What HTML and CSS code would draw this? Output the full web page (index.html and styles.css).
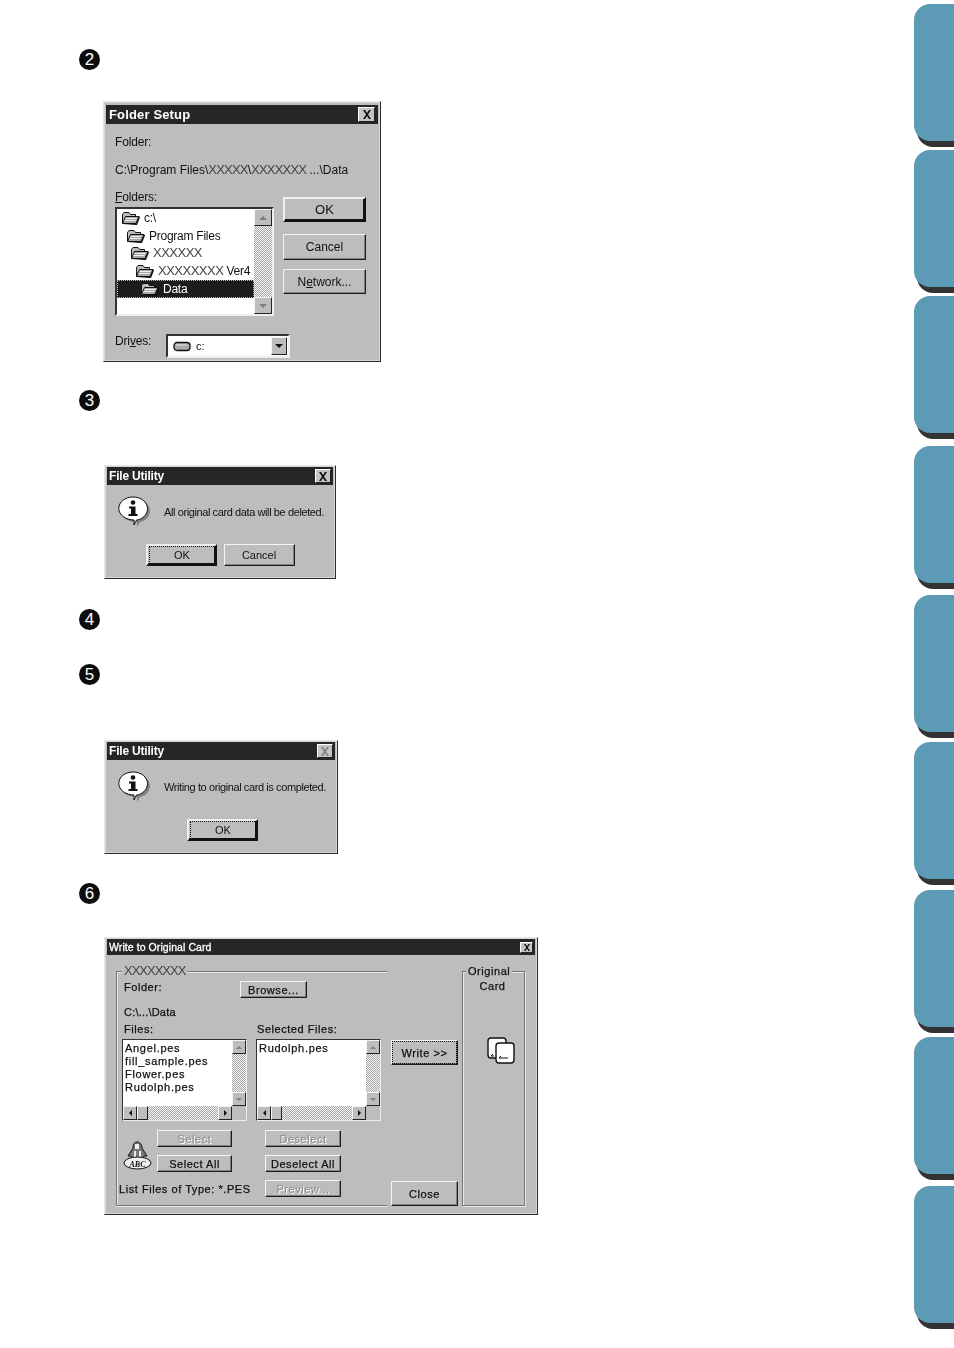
FILE: index.html
```html
<!DOCTYPE html>
<html lang="en">
<head>
<meta charset="utf-8">
<title>Write to Original Card</title>
<link rel="stylesheet" href="styles.css">
</head>
<body>
<svg class="defs" aria-hidden="true">
  <symbol id="folder" viewBox="0 0 19 14">
    <path d="M1.500 12.500V3.500L3 1.500H8L9.500 3.500H14.500V5" fill="#bbb" stroke="#111" stroke-width="1"/>
    <path d="M1.500 12.500L4.500 5.500H18L15 12.500Z" fill="#a8a8a8" stroke="#111" stroke-width="1"/>
    <path d="M15 13L18 5.500L19 6.500L16 14H2Z" fill="#111"/>
    <path d="M4.500 7.500H15.500M3.500 9.500H14.500" stroke="#eee" stroke-width="1"/>
  </symbol>
  <symbol id="info" viewBox="0 0 32 32">
    <path d="M17 3C25 3 32 8 32 15C32 21 27 25 22 26L19 31V26C10 26 3 22 3 15C3 8 9 3 17 3Z" fill="#808080"/>
    <path d="M15 1C23 1 29.500 6 29.500 12.500C29.500 19 24 23.500 18.500 24L16 29V24C8 24 .8 19 .8 12.500C.8 6 7 1 15 1Z" fill="#fff" stroke="#111" stroke-width="1"/>
    <circle cx="15" cy="6.500" r="2.300" fill="#111"/>
    <path d="M11 10.500H17.500V18H19.500V20H10.500V18H13V12.500H11Z" fill="#111"/>
  </symbol>
  <symbol id="close" viewBox="0 0 10 9">
    <path d="M1 0H3L5 3L7 0H9L6 4.500L9 9H7L5 6L3 9H1L4 4.500Z"/>
  </symbol>
</svg>

<div class="page">
  <main class="doc">
    <div class="step step-2">2</div>
    <section class="dlg setup">
      <header class="title title-lg"><span>Folder Setup</span><span class="x x-lg"><svg><use href="#close"/></svg></span></header>
      <p class="txt first">Folder:</p>
      <p class="txt path">C:\Program Files\<span class="xs">XXXXX</span>\<span class="xs">XXXXXXX</span> ...\Data</p>
      <div class="setup-row">
        <div>
          <p class="txt"><u>F</u>olders:</p>
          <div class="tree">
            <ul class="tree-list">
              <li class="lv0"><svg class="fold"><use href="#folder"/></svg>c:\</li>
              <li class="lv1"><svg class="fold"><use href="#folder"/></svg>Program Files</li>
              <li class="lv2"><svg class="fold"><use href="#folder"/></svg><span class="xs">XXXXXX</span></li>
              <li class="lv3"><svg class="fold"><use href="#folder"/></svg><span class="xs">XXXXXXXX</span>&nbsp;Ver4</li>
              <li class="lv4 sel"><svg class="fold"><use href="#folder"/></svg>Data</li>
            </ul>
            <div class="vbar vbar-lg"><span class="sb"><i class="up"></i></span><span class="sb"><i class="down"></i></span></div>
          </div>
        </div>
        <div class="setup-btns">
          <button class="btn def ok-lg">OK</button>
          <button class="btn cancel-lg">Cancel</button>
          <button class="btn net-lg">N<u>e</u>twork...</button>
        </div>
      </div>
      <div class="drive-row">
        <span class="txt drive-label">Dri<u>v</u>es:</span>
        <div class="combo">
          <svg class="hdd" viewBox="0 0 19 11"><rect x="1" y="1.500" width="16" height="8" rx="3" fill="#aaa" stroke="#111" stroke-width="1.300"/><path d="M3 4H14" stroke="#eee"/></svg>
          <span class="combo-val">c:</span>
          <span class="sb combo-btn"><i class="down dark"></i></span>
        </div>
      </div>
    </section>

    <div class="step step-3">3</div>
    <section class="dlg msg msg-a">
      <header class="title title-md"><span>File Utility</span><span class="x"><svg><use href="#close"/></svg></span></header>
      <div class="msg-row"><svg class="info"><use href="#info"/></svg><p class="msg-text">All original card data will be deleted.</p></div>
      <div class="msg-btns">
        <button class="btn def msg-btn"><span class="focus">OK</span></button>
        <button class="btn msg-btn">Cancel</button>
      </div>
    </section>

    <div class="step step-4">4</div>
    <div class="step step-5">5</div>
    <section class="dlg msg msg-b">
      <header class="title title-md"><span>File Utility</span><span class="x x-off"><svg><use href="#close"/></svg></span></header>
      <div class="msg-row"><svg class="info"><use href="#info"/></svg><p class="msg-text">Writing to original card is completed.</p></div>
      <div class="msg-btns">
        <button class="btn def msg-btn"><span class="focus">OK</span></button>
      </div>
    </section>

    <div class="step step-6">6</div>
    <section class="dlg card">
      <header class="title title-sm"><span>Write to Original Card</span><span class="x x-sm"><svg><use href="#close"/></svg></span></header>
      <div class="card-body">
        <div class="group">
          <span class="legend legend-x"><span class="xs xs-sm">XXXXXXXX</span></span>
          <div class="folder-row"><span class="lab folder-lab">Folder:</span><button class="btn btn-sm browse">Browse...</button></div>
          <p class="lab card-path">C:\...\Data</p>
          <div class="lists">
            <div>
              <p class="lab list-lab">Files:</p>
              <div class="lbox">
                <ul class="files"><li>Angel.pes</li><li>fill_sample.pes</li><li>Flower.pes</li><li>Rudolph.pes</li></ul>
                <div class="vbar"><span class="sb sb-sm"><i class="up pale"></i></span><span class="sb sb-sm"><i class="down pale"></i></span></div>
                <div class="hbar"><span class="sb sb-sm"><i class="left"></i></span><span class="sb sb-sm thumb"></span><span class="hfill"></span><span class="sb sb-sm"><i class="right"></i></span></div>
                <span class="corner"></span>
              </div>
            </div>
            <div>
              <p class="lab list-lab">Selected Files:</p>
              <div class="lbox">
                <ul class="files"><li>Rudolph.pes</li></ul>
                <div class="vbar"><span class="sb sb-sm"><i class="up pale"></i></span><span class="sb sb-sm"><i class="down pale"></i></span></div>
                <div class="hbar"><span class="sb sb-sm"><i class="left"></i></span><span class="sb sb-sm thumb"></span><span class="hfill"></span><span class="sb sb-sm"><i class="right"></i></span></div>
                <span class="corner"></span>
              </div>
            </div>
          </div>
          <div class="actions">
            <svg class="stamp" viewBox="0 0 29 29">
              <path d="M14 1C18 1 19 5 19 7L24 15H21L20 18H9L8 15H5L10 7C10 4 11 1 14 1Z" fill="#777" stroke="#111"/>
              <path d="M12 3H16V8H12ZM11 10H13V16H11ZM16 10H18V16H16Z" fill="#eee"/>
              <ellipse cx="14.500" cy="22" rx="13.500" ry="6" fill="#eee" stroke="#111"/>
              <text class="stamp-text" x="14.500" y="25.500" text-anchor="middle">ABC</text>
            </svg>
            <button class="btn btn-sm off act-a">Select</button>
            <button class="btn btn-sm off act-b">Deselect</button>
            <button class="btn btn-sm act-a">Select All</button>
            <button class="btn btn-sm act-b">Deselect All</button>
            <span class="lab type-lab">List Files of Type: *.PES</span>
            <button class="btn btn-sm off act-b">Preview...</button>
          </div>
        </div>
        <div class="write-col">
          <button class="btn btn-sm write"><span class="focus focus-sm">Write &gt;&gt;</span></button>
          <button class="btn btn-sm write">Close</button>
        </div>
        <div class="orig">
          <span class="legend legend-o">Original</span>
          <span class="lab orig-lab">Card</span>
          <svg class="cards" viewBox="0 0 28 27">
            <rect x="1" y="1" width="18" height="20" rx="3" fill="#fff" stroke="#111" stroke-width="1.400"/>
            <rect x="9" y="6" width="18" height="20" rx="3" fill="#fff" stroke="#111" stroke-width="1.400"/>
            <path d="M4 19H7M4 19L6 17M12 21H21M12 21L14 19" stroke="#111" fill="none"/>
          </svg>
        </div>
      </div>
    </section>
  </main>

  <aside class="tabs">
    <div class="tab"></div><div class="tab"></div><div class="tab"></div>
    <div class="tab"></div><div class="tab"></div><div class="tab"></div>
    <div class="tab"></div><div class="tab"></div><div class="tab"></div>
  </aside>
</div>
</body>
</html>
```

FILE: styles.css
```css
* { box-sizing: border-box; }
html, body { margin: 0; padding: 0; background: #fff; }
body { font-family: "Liberation Sans", Arial, sans-serif; color: #111; }
p, ul { margin: 0; padding: 0; list-style: none; }
.defs { display: none; }

.page { display: flex; justify-content: space-between; width: 954px; height: 1348px; overflow: hidden; }
.doc { padding: 49px 0 0 79px; }

/* numbered steps */
.step {
  width: 21px; height: 21px; border-radius: 50%;
  background: #0c0c0c; color: #fff;
  font-size: 17px; line-height: 22px; text-align: center;
}
.step-3 { margin-top: 28px; }
.step-4 { margin-top: 30px; }
.step-5 { margin-top: 34px; }
.step-6 { margin-top: 29px; }

/* dialogs */
.dlg {
  background: #bdbdbd;
  border: 1px solid; border-color: #e6e6e6 #2c2c2c #2c2c2c #e6e6e6;
  outline: 1px solid #d8d8d8; outline-offset: -2px;
  filter: blur(.3px);
  padding: 2px;
}
.title {
  display: flex; align-items: center; justify-content: space-between;
  background: #262626; color: #fff; font-weight: 700;
}
.title-lg { height: 19px; padding: 0 3px 0 3px; font-size: 13px; margin: 1px 0 0; letter-spacing: .15px; }
.title-md { height: 18px; padding: 0 2px 0 2px; font-size: 12px; letter-spacing: -.2px; }
.title-sm { height: 16px; padding: 0 2px 0 2px; font-size: 10.500px; font-weight: 400; letter-spacing: .08px; -webkit-text-stroke: .3px #fff; }
.x {
  display: flex; align-items: center; justify-content: center;
  width: 16px; height: 14px; background: #c4c4c4;
  border: 1px solid; border-color: #fff #222 #222 #fff;
}
.x svg { width: 10px; height: 9px; fill: #111; }
.x-lg { width: 17px; height: 15px; }
.x-sm { width: 13px; height: 11px; }
.x-sm svg { width: 8px; height: 7px; }
.x-off svg { fill: #808080; }

.btn {
  display: block; padding: 0; margin: 0;
  font: 12px/1 "Liberation Sans", Arial, sans-serif; color: #111;
  background: #bdbdbd;
  border: 1px solid; border-color: #f4f4f4 #1c1c1c #1c1c1c #f4f4f4;
  box-shadow: inset -1px -1px 0 #808080;
}
.def { border: 2px solid #111; border-color: #eee #111 #111 #eee; box-shadow: -1px -1px 0 #111 inset; }

.txt { font-size: 12px; line-height: 14px; letter-spacing: -.15px; }
.xs { font-size: 13px; line-height: 12px; letter-spacing: -.8px; font-weight: 400; color: #444; }
.xs-sm { -webkit-text-stroke: 0; letter-spacing: -1px; }

/* folder setup */
.setup { width: 278px; height: 261px; margin: 31px 0 0 24px; }
.setup .first { margin: 11px 0 0 9px; }
.setup .path { margin: 14px 0 0 9px; letter-spacing: 0; }
.setup-row { display: flex; margin: 13px 0 0 9px; }
.tree {
  display: flex; width: 159px; height: 109px; margin-top: 3px;
  border: 2px solid; border-color: #333 #eee #eee #333;
  background: #fff;
}
.tree-list { flex: 1; font-size: 12px; letter-spacing: -.25px; }
.tree-list .xs { letter-spacing: -.5px; }
.tree-list li { display: flex; align-items: center; height: 17.800px; white-space: nowrap; }
.fold { width: 19px; height: 14px; margin-right: 4px; flex: none; }
.lv0 { padding-left: 4px; }
.lv1 { padding-left: 9px; }
.lv2 { padding-left: 13px; }
.lv3 { padding-left: 18px; }
.lv4 { padding-left: 23px; }
.sel { background: #1c1c1c; color: #fff; outline: 1px dotted #bbb; outline-offset: -1px; }

.vbar {
  display: flex; flex-direction: column; justify-content: space-between;
  background: repeating-conic-gradient(#f4f4f4 0 25%, #a8a8a8 0 50%) 0 0 / 2px 2px;
}
.vbar-lg { width: 18px; }
.vbar-lg .sb { height: 17px; }
.sb {
  display: flex; align-items: center; justify-content: center;
  background: #bdbdbd;
  border: 1px solid; border-color: #f4f4f4 #222 #222 #f4f4f4;
}
.up, .down, .left, .right { width: 0; height: 0; border: 4px solid transparent; }
.up { border-bottom-color: #808080; border-top-width: 0; }
.down { border-top-color: #808080; border-bottom-width: 0; }
.dark { border-top-color: #111; }
.pale { border-width: 3px; }
.pale.up { border-top-width: 0; }
.pale.down { border-bottom-width: 0; }
.left { border-width: 3px; border-left-width: 0; border-right-color: #111; }
.right { border-width: 3px; border-right-width: 0; border-left-color: #111; }

.setup-btns { margin: 7px 0 0 9px; }
.setup-btns .btn { width: 83px; }
.ok-lg { height: 25px; font-size: 13px; }
.cancel-lg { height: 26px; margin-top: 12px; }
.net-lg { height: 25px; margin-top: 9px; }
.drive-row { display: flex; align-items: center; margin: 18px 0 0 9px; }
.drive-label { width: 51px; margin-top: -11px; }
.combo {
  display: flex; align-items: center; width: 124px; height: 24px;
  background: #fff; border: 2px solid; border-color: #333 #eee #eee #333;
  padding: 0 1px 0 5px; font-size: 11px;
}
.hdd { width: 19px; height: 11px; flex: none; margin-right: 4px; }
.combo-val { flex: 1; }
.combo-btn { width: 16px; height: 18px; }

/* message boxes */
.msg { height: 114px; margin: 54px 0 0 25px; padding-top: 1px; }
.msg-a { width: 232px; }
.msg-b { width: 234px; margin-top: 55px; }
.msg-row { display: flex; align-items: center; margin: 11px 0 0 11px; }
.info { width: 32px; height: 32px; flex: none; margin-right: 14px; }
.msg-text { font-size: 11px; letter-spacing: -.4px; white-space: nowrap; }
.msg-btns { display: flex; justify-content: center; gap: 7px; margin-top: 16px; }
.msg-b .msg-btns { padding-left: 2px; }
.msg-btn { width: 71px; height: 22px; font-size: 11px; }
.focus { display: flex; align-items: center; justify-content: center; margin: 1px 0 1px 2px; height: 16px; outline: 1px dotted #111; }

/* write to card */
.card { width: 434px; height: 278px; margin: 33px 0 0 25px; padding-top: 1px; }
.card-body { display: flex; margin: 0 0 0 9px; padding-top: 16px; }
.lab, .btn-sm, .legend, .files {
  font-size: 11px; line-height: 14px; letter-spacing: .55px;
  -webkit-text-stroke: .25px #111; white-space: nowrap;
}
.files { letter-spacing: .7px; }
.group {
  width: 271px; height: 235px; padding: 0 0 0 5px;
  border-top: 1px solid #777; border-left: 1px solid #777; border-bottom: 1px solid #777;
  box-shadow: inset 1px 1px 0 #e8e8e8, 0 1px 0 #e8e8e8;
}
.legend { display: block; background: #bdbdbd; }
.legend-x { width: 65px; height: 14px; margin: -8px 0 0 0; padding-left: 2px; }
.folder-row { display: flex; align-items: center; height: 17px; margin-top: 3px; }
.folder-lab { width: 118px; padding-left: 2px; margin-bottom: 5px; }
.browse { width: 67px; height: 17px; }
.card-path { margin: 7px 0 0 2px; letter-spacing: .2px; }
.lists { display: flex; gap: 9px; margin-top: 3px; }
.list-lab { padding-left: 2px; height: 14px; }
.lists > div + div .list-lab { padding-left: 1px; }
.lbox {
  display: grid; grid-template-columns: 1fr 14px; grid-template-rows: 1fr 14px;
  width: 125px; height: 82px; margin-top: 3px;
  border: 1px solid; border-color: #333 #eee #eee #333; background: #fff;
}
.files { padding: 2px 0 0 2px; line-height: 13px; overflow: hidden; }
.sb-sm { width: 14px; height: 14px; }
.hbar {
  display: flex;
  background: repeating-conic-gradient(#f4f4f4 0 25%, #a8a8a8 0 50%) 0 0 / 2px 2px;
}
.thumb { width: 11px; }
.hfill { flex: 1; }
.corner { background: #bdbdbd; }
.actions {
  display: grid; grid-template-columns: 35px 75px 33px 76px; grid-template-rows: 17px 17px 17px;
  row-gap: 8px; margin-top: 9px; align-items: center;
}
.stamp { grid-row: 1 / span 2; grid-column: 1; width: 29px; height: 29px; margin: 8px 0 0 1px; }
.stamp-text { font: italic 700 8px "Liberation Serif", serif; fill: #111; }
.act-a { grid-column: 2; height: 17px; }
.act-b { grid-column: 4; height: 17px; }
.off { color: #8a8a8a; -webkit-text-stroke: 0; text-shadow: 1px 1px 0 #fff; }
.type-lab { grid-column: 1 / span 3; margin-left: -3px; letter-spacing: .55px; }

.write-col { display: flex; flex-direction: column; justify-content: space-between; width: 67px; height: 235px; margin-left: 4px; padding-top: 69px; }
.write { height: 25px; width: 67px; }
.focus-sm { height: 21px; margin: 1px; }

.orig {
  display: flex; flex-direction: column; align-items: center;
  width: 63px; height: 235px; margin-left: 4px;
  border: 1px solid #777; box-shadow: inset 1px 1px 0 #e8e8e8, 1px 1px 0 #e8e8e8;
}
.legend-o { align-self: flex-start; margin: -8px 0 0 3px; padding: 0 2px; }
.orig-lab { margin: 1px 2px 0 0; }
.cards { width: 28px; height: 27px; margin: 44px 0 0 15px; }

/* side tabs */
.tabs { display: flex; flex-direction: column; width: 40px; flex: none; }
.tab {
  height: 137px; flex: none;
  background: #5c9ab6;
  border-radius: 16px 0 0 16px;
  box-shadow: 3px 6px 0 #333;
}
.tab:nth-child(1) { margin-top: 4px; }
.tab:nth-child(2), .tab:nth-child(3) { margin-top: 9px; }
.tab:nth-child(4) { margin-top: 13px; }
.tab:nth-child(5), .tab:nth-child(9) { margin-top: 12px; }
.tab:nth-child(6), .tab:nth-child(8) { margin-top: 10px; }
.tab:nth-child(7) { margin-top: 11px; }
```
